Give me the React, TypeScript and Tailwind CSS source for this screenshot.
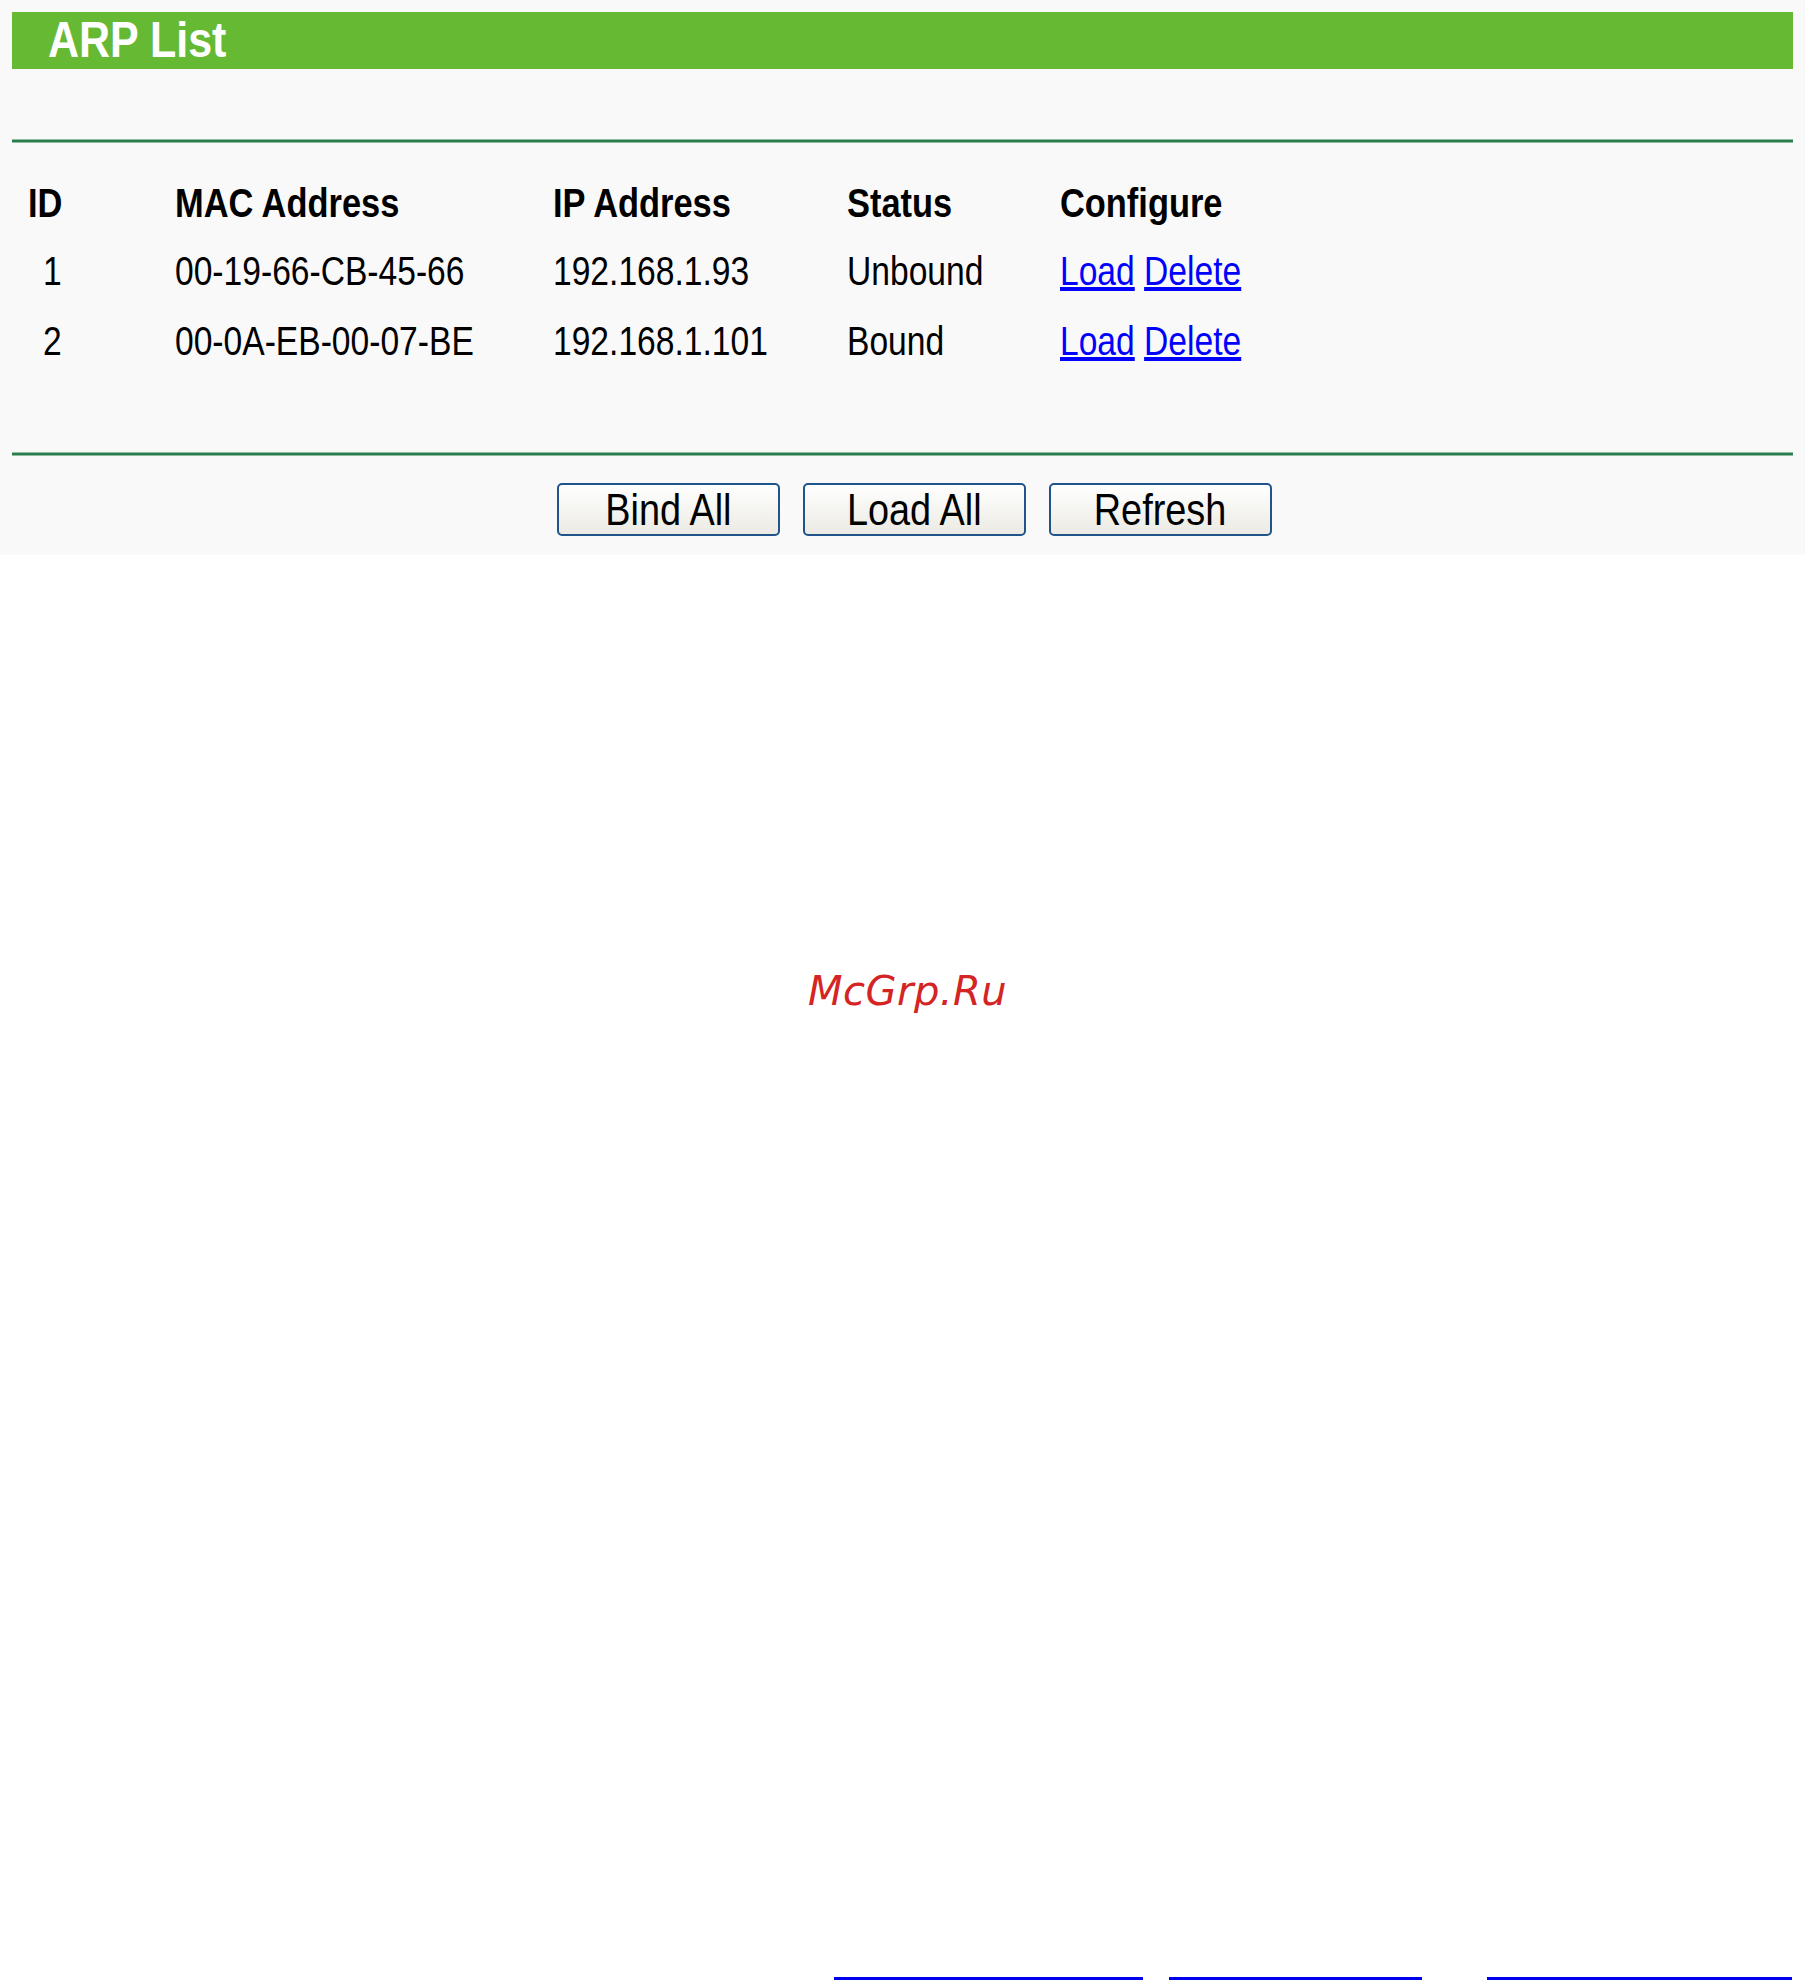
import React from "react";

const rows = [
  { id: "1", mac: "00-19-66-CB-45-66", ip: "192.168.1.93", status: "Unbound" },
  { id: "2", mac: "00-0A-EB-00-07-BE", ip: "192.168.1.101", status: "Bound" },
];

const sans = "font-['Liberation_Sans',Arial,sans-serif]";

// the original page renders a narrow bitmap-ish sans, so squeeze Arial sideways
function Squeeze({ children, bold = false }: { children: React.ReactNode; bold?: boolean }) {
  return (
    <span className={`inline-block origin-left whitespace-nowrap ${bold ? "scale-x-[0.86]" : "scale-x-[0.84]"}`}>
      {children}
    </span>
  );
}

function Rule() {
  return <div className="mx-[12px] h-[4px] border-y border-[#8dbf9f] bg-[#2f7b50]" />;
}

function Btn({ label }: { label: string }) {
  return (
    <button
      className={`${sans} h-[53px] w-[223px] rounded-[5px] border-2 border-[#22548c] bg-gradient-to-b from-white to-[#ebeae3] text-[44px] leading-none text-black`}
    >
      <span className="inline-block scale-x-[0.86]">{label}</span>
    </button>
  );
}

export default function App() {
  return (
    <div className="relative flex h-[1980px] w-full flex-col bg-white">
      <div className={`${sans} bg-[#f9f9f9] pt-[12px] pb-[19px]`}>
        <div className="mx-[12px] h-[57px] bg-[#66b933] pl-[36px] text-[50px] font-bold leading-[57px] text-white">
          <Squeeze bold>ARP List</Squeeze>
        </div>

        <div className="mt-[70px]">
          <Rule />
        </div>

        <div className="mt-[25px] grid grid-cols-[147px_378px_294px_213px_1fr] pl-[28px] text-[40px] text-black">
          {["ID", "MAC Address", "IP Address", "Status", "Configure"].map((h) => (
            <div key={h} className="h-[68px] font-bold leading-[70px]">
              <Squeeze bold>{h}</Squeeze>
            </div>
          ))}
          {rows.map((r) => (
            <React.Fragment key={r.id}>
              <div className="h-[70px] pl-[15px] leading-[70px]">
                <Squeeze>{r.id}</Squeeze>
              </div>
              <div className="h-[70px] leading-[70px]">
                <Squeeze>{r.mac}</Squeeze>
              </div>
              <div className="h-[70px] leading-[70px]">
                <Squeeze>{r.ip}</Squeeze>
              </div>
              <div className="h-[70px] leading-[70px]">
                <Squeeze>{r.status}</Squeeze>
              </div>
              <div className="h-[70px] leading-[70px] text-[#0000ff]">
                <Squeeze>
                  <a href="#" className="underline">Load</a>{" "}
                  <a href="#" className="underline">Delete</a>
                </Squeeze>
              </div>
            </React.Fragment>
          ))}
        </div>

        <div className="mt-[76px]">
          <Rule />
        </div>

        <div className="mt-[27px] flex gap-[23px] pl-[557px]">
          <Btn label="Bind All" />
          <Btn label="Load All" />
          <Btn label="Refresh" />
        </div>
      </div>

      <div className="absolute left-[808px] top-[966px] font-['DejaVu_Sans',sans-serif] text-[40px] italic leading-[50px] tracking-[0.5px] text-[#d42424]">
        McGrp.Ru
      </div>

      <div className="flex-1" />
      <div className="flex h-[3px]">
        <div className="ml-[834px] w-[309px] bg-[#0000f0]" />
        <div className="ml-[26px] w-[253px] bg-[#0000f0]" />
        <div className="ml-[65px] w-[305px] bg-[#0000f0]" />
      </div>
    </div>
  );
}
